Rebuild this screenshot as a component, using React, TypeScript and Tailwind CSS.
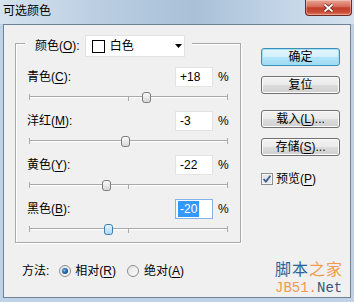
import type { CSSProperties, ReactNode } from 'react';

const rows = [
  { name: '青色', key: 'C', value: 18, text: '+18' },
  { name: '洋红', key: 'M', value: -3, text: '-3' },
  { name: '黄色', key: 'Y', value: -22, text: '-22' },
  { name: '黑色', key: 'B', value: -20, text: '-20', focus: true },
];

const Mn = ({ children }: { children: ReactNode }) => (
  <span className="underline decoration-1 underline-offset-[2px]">{children}</span>
);

const Thumb = ({ style, active }: { style: CSSProperties; active?: boolean }) => (
  <svg width="9" height="11" className="absolute top-[5px]" style={style}>
    <defs>
      <linearGradient id="thumbN" x1="0" y1="0" x2="0" y2="1">
        <stop offset="0" stopColor="#fdfdfd" />
        <stop offset="1" stopColor="#d4d4d4" />
      </linearGradient>
      <linearGradient id="thumbA" x1="0" y1="0" x2="0" y2="1">
        <stop offset="0" stopColor="#eaf6fd" />
        <stop offset="1" stopColor="#a9d8f3" />
      </linearGradient>
    </defs>
    <path
      d="M3 0.5 H6 Q8.5 0.5 8.5 3 V8 Q8.5 10.5 6.5 10.5 H2.5 Q0.5 10.5 0.5 8 V3 Q0.5 0.5 3 0.5 Z"
      fill={active ? 'url(#thumbA)' : 'url(#thumbN)'}
      stroke={active ? '#3c7fb1' : '#7c7c7c'}
    />
  </svg>
);

const Slider = ({ value, active }: { value: number; active?: boolean }) => {
  const left = ((value + 100) / 200) * 199 - 4.5;
  return (
    <div className="relative ml-[2px] mr-[1px] h-[24px] pt-[9px]">
      <div className="h-px bg-[#a9a9a9] shadow-[0_1px_0_#fff]" />
      <div className="absolute left-0 top-[7px] h-[6px] w-px bg-[#a9a9a9]" />
      <div className="absolute left-[99px] top-[9px] h-[5px] w-px bg-[#a9a9a9]" />
      <div className="absolute right-0 top-[7px] h-[6px] w-px bg-[#a9a9a9]" />
      <Thumb style={{ left }} active={active} />
    </div>
  );
};

const Radio = ({ checked }: { checked?: boolean }) => (
  <svg width="12" height="12" className="shrink-0">
    <defs>
      <linearGradient id="radioBg" x1="0" y1="0" x2="1" y2="1">
        <stop offset="0" stopColor="#e4e4e4" />
        <stop offset="1" stopColor="#fbfbfb" />
      </linearGradient>
      <radialGradient id="radioDot" cx="0.4" cy="0.4" r="0.6">
        <stop offset="0" stopColor="#7fc3f0" />
        <stop offset="0.5" stopColor="#2b76b8" />
        <stop offset="1" stopColor="#16487a" />
      </radialGradient>
    </defs>
    <circle cx="6" cy="6" r="5.5" fill="url(#radioBg)" stroke="#8c8c8c" />
    {checked && <circle cx="6" cy="6" r="3" fill="url(#radioDot)" />}
  </svg>
);

const Checkbox = () => (
  <svg width="12" height="12" className="shrink-0">
    <rect x="0.5" y="0.5" width="11" height="11" fill="#f6f6f6" stroke="#8e8f8f" />
    <rect x="2" y="2" width="8" height="8" fill="#e3e6ea" />
    <path d="M2.6 6 L4.9 8.6 L9.4 2.8" fill="none" stroke="#3d5a8f" strokeWidth="1.7" />
  </svg>
);

const btnBase =
  'flex h-[18px] w-[79px] items-center justify-center rounded-[3px] border text-[12px] leading-[16px] text-black';
const btnNormal =
  btnBase +
  ' border-[#707070] bg-[linear-gradient(#f2f2f2,#ebebeb_49%,#dddddd_50%,#cfcfcf)] shadow-[inset_0_0_0_1px_#fcfcfc]';
const btnDefault =
  btnBase +
  ' border-[#3c8fb8] bg-[linear-gradient(#e6f7fd,#d2f0fc_49%,#b4e6fb_50%,#9ed9f3)] shadow-[inset_0_0_0_1px_#9fe0f7]';

export default function App() {
  return (
    <div className="relative flex h-[302px] w-[354px] flex-col bg-[#bfd2e6] font-['Liberation_Sans','Noto_Sans_CJK_SC',sans-serif] text-black">
      {/* title bar */}
      <div className="flex h-[24px] items-start justify-between bg-[linear-gradient(90deg,#d5e2ef,#b9cde1_30%,#a9c0d7_55%,#c3d5e8_80%,#d4e1ee)]">
        <span className="pl-[3px] pt-[3px] text-[12px] leading-[16px]">可选颜色</span>
        <div className="mr-[2px] flex h-[16px] w-[47px] items-center justify-center rounded-b-[4px] border border-t-0 border-[#6e2b22] bg-[linear-gradient(#eba596,#d66a58_45%,#c13f2b_52%,#c84b35_80%,#e27f61)] shadow-[inset_0_0_0_1px_rgba(255,255,255,0.3)]">
          <svg width="11" height="10">
            <path d="M1.5 1.5 L9.5 8.5 M9.5 1.5 L1.5 8.5" stroke="#5a1d16" strokeWidth="3.2" />
            <path d="M1.5 1.5 L9.5 8.5 M9.5 1.5 L1.5 8.5" stroke="#fff" strokeWidth="1.8" />
          </svg>
        </div>
      </div>

      {/* client area */}
      <div className="mx-[3px] mb-[4px] flex flex-1 flex-col border border-[#6d8199] bg-[#f0f0f0]">
        <div className="flex pl-[11px] pt-[18px]">
          {/* group box */}
          <div className="h-[200px] w-[226px] border border-[#a9a9a9] px-[11px] shadow-[inset_1px_1px_0_#fff,1px_1px_0_#fff]">
            <div className="-mt-[9px] ml-[-2px] mb-[10px] flex h-[22px] w-fit items-center bg-[#f0f0f0] pl-[10px] pr-[7px]">
              <span className="text-[12px] leading-[16px]">
                颜色(<Mn>O</Mn>):
              </span>
              <div className="ml-[5px] flex h-[22px] w-[100px] items-center border border-[#e2e2e2] bg-white pl-[6px] pr-[2px]">
                <div className="h-[13px] w-[13px] border border-black bg-white" />
                <span className="ml-[5px] flex-1 text-[12px] leading-[16px]">白色</span>
                <svg width="7" height="4">
                  <path d="M0 0 H7 L3.5 4 Z" fill="#000" />
                </svg>
              </div>
            </div>

            {rows.map((r) => (
              <div key={r.key}>
                <div className="flex h-[20px] items-center">
                  <span className="flex-1 text-[12px] leading-[16px]">
                    {r.name}(<Mn>{r.key}</Mn>):
                  </span>
                  {r.focus ? (
                    <div className="flex h-[20px] w-[38px] items-center border border-[#7eb4ea] bg-white pl-[2px] text-[12px]">
                      <span className="bg-[#3399ff] px-[2px] leading-[16px] text-white">{r.text}</span>
                    </div>
                  ) : (
                    <div className="flex h-[20px] w-[38px] items-center border border-[#e3e3e3] bg-white pl-[4px] text-[12px] leading-[16px]">
                      {r.text}
                    </div>
                  )}
                  <span className="w-[16px] pl-[5px] text-[12px] leading-[16px]">%</span>
                </div>
                <Slider value={r.value} active={r.focus} />
              </div>
            ))}
          </div>

          {/* buttons */}
          <div className="ml-[20px] mt-[5px] flex w-[79px] flex-col">
            <div className={btnDefault}>确定</div>
            <div className={btnNormal + ' mt-[10px]'}>复位</div>
            <div className={btnNormal + ' mt-[16px]'}>
              载入(<Mn>L</Mn>)...
            </div>
            <div className={btnNormal + ' mt-[10px]'}>
              存储(<Mn>S</Mn>)...
            </div>
            <div className="mt-[16px] flex h-[14px] items-center">
              <Checkbox />
              <span className="ml-[3px] text-[12px] leading-[16px]">
                预览(<Mn>P</Mn>)
              </span>
            </div>
          </div>
        </div>

        {/* method */}
        <div className="mt-[20px] flex h-[16px] items-center pl-[18px] text-[12px] leading-[16px]">
          <span>方法:</span>
          <span className="ml-[10px]">
            <Radio checked />
          </span>
          <span className="ml-[4px]">
            相对(<Mn>R</Mn>)
          </span>
          <span className="ml-[11px]">
            <Radio />
          </span>
          <span className="ml-[5px]">
            绝对(<Mn>A</Mn>)
          </span>
        </div>
      </div>

      {/* watermark */}
      <div className="absolute left-[275px] top-[257px] flex flex-col">
        <span className="h-[23px] font-['Noto_Sans_CJK_SC',sans-serif] text-[16px] leading-[23px] tracking-[1px]">
          <span className="text-[#2f6199]">脚本</span>
          <span className="text-[#f29a4d]">之家</span>
        </span>
        <span className="h-[16px] font-['Liberation_Mono',monospace] text-[14px] leading-[16px]">
          <span className="text-[#f29a4d]">JB51.</span>
          <span className="text-[#37557a]">Net</span>
        </span>
      </div>
    </div>
  );
}
